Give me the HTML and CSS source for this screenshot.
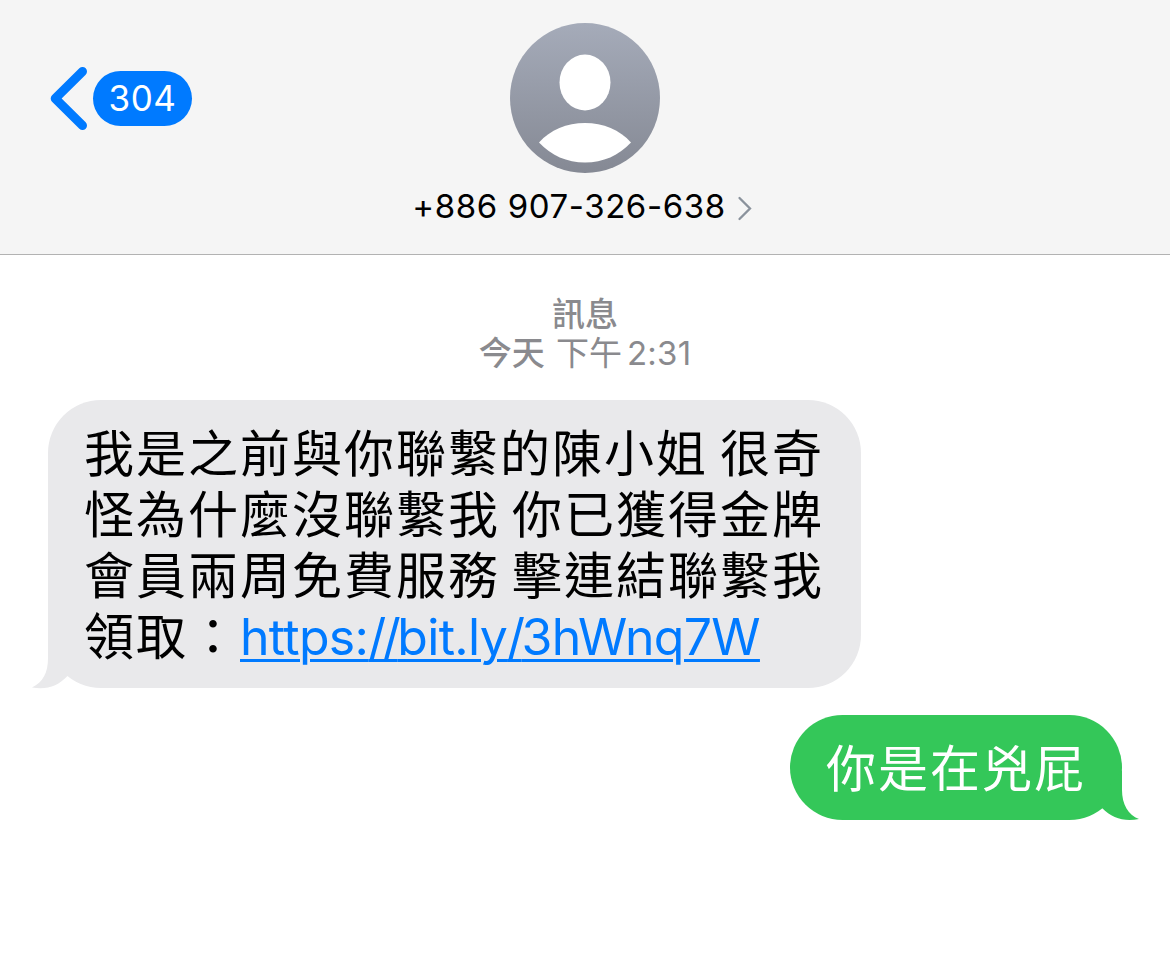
FILE: index.html
```html
<!DOCTYPE html>
<html lang="zh-Hant">
<head>
    <meta charset="UTF-8">
    <meta name="viewport" content="width=device-width, initial-scale=1.0">
    <title>訊息</title>
    <link rel="stylesheet" href="styles.css">
</head>
<body>
    <header class="header">
        <a class="back" href="#">
            <svg class="back-arrow" width="38" height="64" viewBox="0 0 38 64">
                <path d="M32.500 5.500 5.200 32.500l27.300 27" fill="none" stroke="#007aff" stroke-width="9" stroke-linecap="round" stroke-linejoin="round"/>
            </svg>
            <span class="badge">304</span>
        </a>

        <div class="contact">
            <svg class="avatar" width="150" height="150" viewBox="0 0 150 150">
                <defs>
                    <linearGradient id="avatarFill" x1="0" y1="0" x2="0" y2="1">
                        <stop offset="0" stop-color="#a5abb9"/>
                        <stop offset="1" stop-color="#858994"/>
                    </linearGradient>
                </defs>
                <circle cx="75" cy="75" r="75" fill="url(#avatarFill)"/>
                <ellipse cx="75" cy="59.500" rx="25.500" ry="28" fill="#fff"/>
                <path d="M29 119.500C40 107 57 100 75 100s35 7 46 19.500c-12 13-28 20-46 20s-34-7-46-20z" fill="#fff"/>
            </svg>
            <div class="number">
                <span>+886 907-326-638</span>
                <svg class="chevron" width="16" height="26" viewBox="0 0 16 26">
                    <path d="M2.500 3 13 13.500 2.500 24" fill="none" stroke="#8a929c" stroke-width="2.300" stroke-linecap="round"/>
                </svg>
            </div>
        </div>
    </header>

    <main class="messages">
        <div class="timestamp">
            <div class="service">訊息</div>
            <div><b>今天</b> 下午<span class="time">2:31</span></div>
        </div>

        <div class="bubble received">
            我是之前與你聯繫的陳小姐 很奇<br>
            怪為什麼沒聯繫我 你已獲得金牌<br>
            會員兩周免費服務 擊連結聯繫我<br>
            領取：<a class="link" href="#">https:<span class="slash">//</span>bit.ly<span class="slash">/</span>3hWnq7W</a>
            <svg class="tail" width="50" height="60" viewBox="0 0 50 60">
                <path d="M15 0v30C15 45 10 54 -1 59.500c15 2.500 26-1.500 35.500-11.500L50 30V0z" fill="#e9e9eb"/>
            </svg>
        </div>

        <div class="bubble sent">
            你是在兇屁
            <svg class="tail" width="50" height="60" viewBox="0 0 50 60">
                <path d="M34 10v20c0 14 6 25 17 29-15 3-27-1-37-11L10 40z" fill="#34c759"/>
            </svg>
        </div>
    </main>
</body>
</html>
```
FILE: styles.css
```css
body {
    margin: 0;
    height: 954px;
    overflow: hidden;
    background-color: #fff;
    color: #000;
    font-family: Inter, "Noto Sans CJK TC", sans-serif;
}

.header {
    display: grid;
    grid-template-columns: 1fr auto 1fr;
    box-sizing: border-box;
    height: 255px;
    padding: 23px 50px 0;
    background-color: #f5f5f5;
    border-bottom: 1px solid #b2b2b2;
}

.back {
    display: flex;
    align-items: center;
    align-self: start;
    gap: 5px;
    height: 64px;
    margin-top: 43px;
    text-decoration: none;
}

.badge {
    box-sizing: border-box;
    width: 99px;
    height: 55px;
    border-radius: 28px;
    background-color: #007aff;
    color: #fff;
    font-size: 35px;
    line-height: 55px;
    letter-spacing: 0.5px;
    text-align: center;
}

.contact {
    display: flex;
    flex-direction: column;
    align-items: center;
}

.number {
    display: flex;
    align-items: center;
    gap: 11px;
    margin: 14px 5px 0 0;
    font-size: 33px;
    line-height: 40px;
    letter-spacing: 0.6px;
    white-space: nowrap;
}

.number span {
    margin-top: -1px;
}

.chevron {
    margin-top: 2px;
}

.messages {
    display: flex;
    flex-direction: column;
    padding: 40px 48px 0;
}

.timestamp {
    color: #8a8a8e;
    font-size: 33px;
    line-height: 39px;
    text-align: center;
}

.service,
.timestamp b {
    font-weight: 500;
}

.timestamp b {
    margin-right: 2px;
}

.time {
    margin-left: 5px;
    letter-spacing: 0.2px;
}

.bubble {
    position: relative;
    box-sizing: border-box;
    font-size: 50px;
    line-height: 61px;
    letter-spacing: 2px;
    word-spacing: -4px;
    white-space: nowrap;
}

.received {
    align-self: flex-start;
    width: 813px;
    height: 288px;
    margin-top: 27px;
    padding: 24px 36px 20px;
    border-radius: 53px;
    background-color: #e9e9eb;
}

.sent {
    align-self: flex-end;
    width: 332px;
    height: 105px;
    margin-top: 27px;
    padding: 24px 36px 20px;
    border-radius: 53px;
    background-color: #34c759;
    color: #fff;
}

.link {
    color: #007aff;
    letter-spacing: -0.7px;
    text-decoration: underline;
    text-decoration-thickness: 3px;
    text-underline-offset: 4px;
}

.slash {
    letter-spacing: -3.5px;
}

.tail {
    position: absolute;
    bottom: 0;
    overflow: visible;
}

.received .tail {
    left: -15px;
}

.sent .tail {
    right: -16px;
}
```
